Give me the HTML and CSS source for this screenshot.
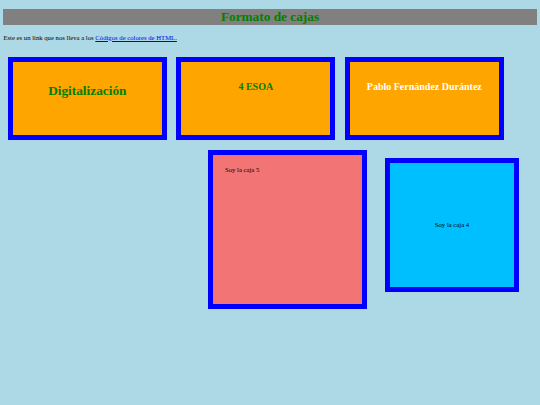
FILE: index.html
```html
<!DOCTYPE html>
<html lang="es">
<head>
<meta charset="utf-8">
<title>Formato de cajas</title>
<link rel="stylesheet" href="styles.css">
</head>
<body>
<h1 class="title">Formato de cajas</h1>
<p class="intro">Este es un link que nos lleva a los <a class="link" href="#">Códigos de colores de HTML.</a></p>
<div class="row row-top">
  <div class="box orange"><h1 class="big">Digitalización</h1></div>
  <div class="box orange"><h2 class="mid">4 ESOA</h2></div>
  <div class="box orange"><h2 class="mid white">Pablo Fernández Durántez</h2></div>
</div>
<div class="row row-bottom">
  <div class="box pink">Soy la caja 5</div>
  <div class="box cyan">Soy la caja 4</div>
</div>
</body>
</html>
```

FILE: styles.css
```css
html, body {
  background: #ADD8E6;
}
body {
  margin: 0;
  padding: 0 3.4px;
  font-family: "Liberation Serif", "Times New Roman", serif;
  font-size: 6.7px;
  color: #000;
}
.title {
  margin: 9px 0 0;
  background: #808080;
  color: #008000;
  font-size: 13.3px;
  font-weight: bold;
  text-align: center;
  height: 15.5px;
  line-height: 15.5px;
}
.intro {
  margin: 9px 0 0;
  line-height: 7.6px;
}
.link {
  color: #0000EE;
  text-decoration: underline;
}
.row {
  display: flex;
  align-items: flex-start;
}
.row-top {
  margin-top: 16px;
  padding-left: 4.4px;
  gap: 9.5px;
}
.box {
  box-sizing: border-box;
  border: 5px solid #0000FF;
}
.orange {
  width: 159px;
  height: 83px;
  padding: 12px;
  background: #FFA500;
  text-align: center;
}
.big {
  margin: 8.6px 0;
  font-size: 13.3px;
  line-height: 15.3px;
  color: #008000;
}
.mid {
  margin: 7.4px 0;
  font-size: 10px;
  line-height: 11.5px;
  color: #008000;
}
.white {
  color: #FFFFFF;
}
.row-bottom {
  margin-top: 10px;
}
.pink {
  width: 159px;
  height: 159px;
  margin-left: 204.6px;
  padding: 10.5px 12px;
  background: #F37474;
  line-height: 7.6px;
}
.cyan {
  width: 134px;
  height: 134px;
  margin-left: 18px;
  margin-top: 8px;
  background: #00BFFF;
  display: flex;
  align-items: center;
  justify-content: center;
  line-height: 7.6px;
}
```
